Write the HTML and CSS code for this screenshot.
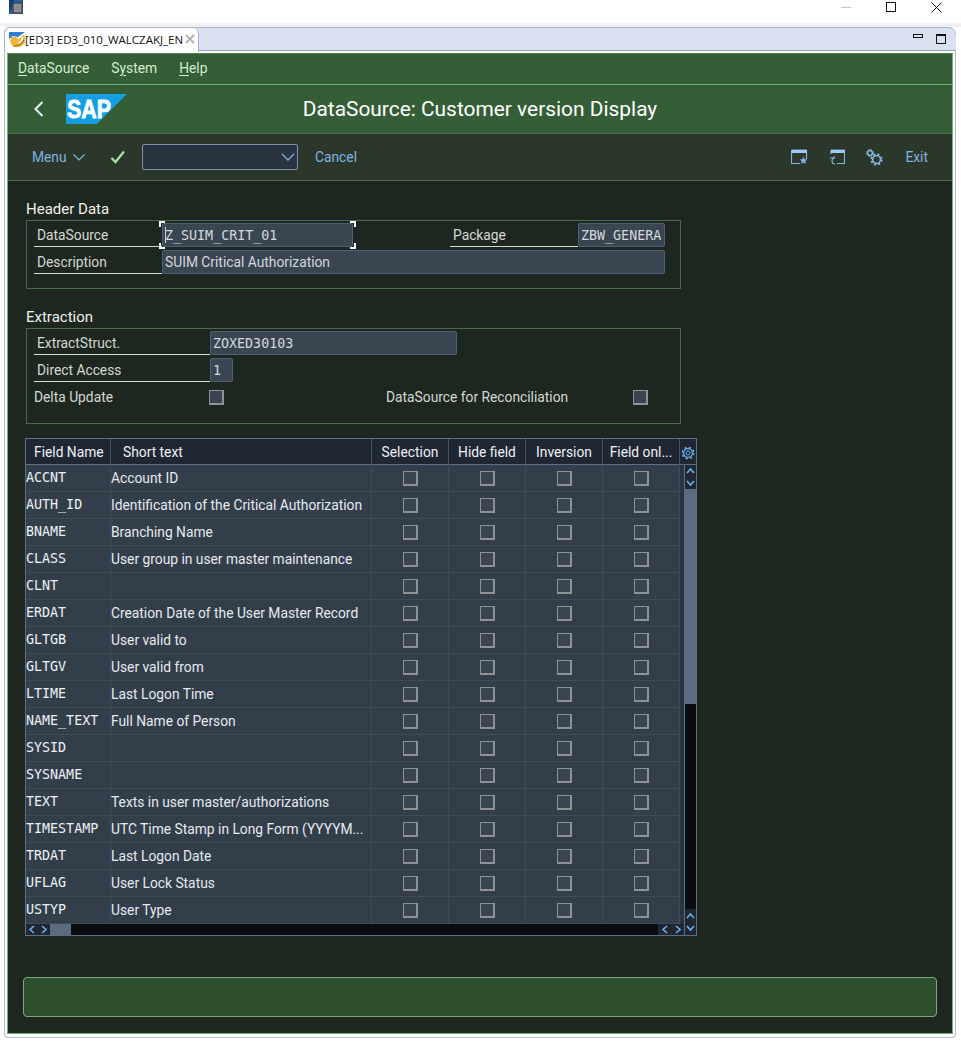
FILE: index.html
```html
<!DOCTYPE html>
<html lang="en">
<head>
<meta charset="utf-8">
<title>DataSource: Customer version Display</title>
<link rel="stylesheet" href="styles.css">
</head>
<body>
<div class="titlebar">
  <svg class="appicon" width="14" height="14" viewBox="0 0 14 14"><rect width="14" height="14" fill="#2f5c9e"/><rect x="4" y="3" width="9" height="10" fill="#8d8d8d" stroke="#333"/><path d="M0 14 L5 0 H0Z" fill="#143a78"/></svg>
  <div class="winctl">
    <span class="wmin"></span>
    <span class="wmax"></span>
    <svg width="11" height="11" viewBox="0 0 11 11"><path d="M0.5 0.5 L10.5 10.5 M10.5 0.5 L0.5 10.5" stroke="#111" stroke-width="1"/></svg>
  </div>
</div>
<div class="band"></div>
<div class="frame">
  <div class="tabstrip">
    <div class="tab">
      <svg width="16" height="15" viewBox="0 0 16 15"><path d="M0 0 H16 L9 5 L4 4 L0 7Z" fill="#2f7fd0"/><path d="M2 5 H7 L10 7 L15 2 L16 5 V10 Q14 15 9 15 H4 L1 10Z" fill="#f2b63c"/><path d="M9 11 Q13 10 13.5 5" fill="none" stroke="#fff" stroke-width="1.6"/><path d="M5 14 Q12 14 15 8" fill="none" stroke="#a8741c" stroke-width="1.2"/></svg>
      <span class="tabtext">[ED3] ED3_010_WALCZAKJ_EN</span>
      <svg class="tabx" width="10" height="10" viewBox="0 0 10 10"><path d="M1 1 L9 9 M9 1 L1 9" stroke="#b4b4b4" stroke-width="2"/></svg>
    </div>
    <div class="tabctl">
      <span class="tmin"></span>
      <span class="tres"></span>
    </div>
  </div>
  <div class="app">
    <div class="menubar">
      <span class="mi"><u>D</u>ataSource</span>
      <span class="mi">S<u>y</u>stem</span>
      <span class="mi"><u>H</u>elp</span>
    </div>
    <div class="shell">
      <svg class="back" width="10" height="16" viewBox="0 0 10 16"><path d="M8.5 1 L1.5 8 L8.5 15" fill="none" stroke="#e8f0f6" stroke-width="2"/></svg>
      <svg class="logo" width="62" height="30" viewBox="0 0 62 30">
        <polygon points="0,0 61,0 31,30 0,30" fill="#139fe2"/>
        <text x="1" y="24" class="logotext" textLength="44" lengthAdjust="spacingAndGlyphs">SAP</text>
      </svg>
      <div class="apptitle">DataSource: Customer version Display</div>
    </div>
    <div class="toolbar">
      <span class="tlink menu">Menu</span>
      <svg class="chev" width="12" height="7" viewBox="0 0 12 7"><path d="M0.5 0.5 L6 6 L11.5 0.5" fill="none" stroke="#7fb4e0" stroke-width="1.2"/></svg>
      <svg class="check" width="16" height="14" viewBox="0 0 16 14"><path d="M1.5 8 L5.5 12 L14 1.5" fill="none" stroke="#a8e2a8" stroke-width="2.2"/></svg>
      <div class="combo"><svg width="14" height="8" viewBox="0 0 14 8"><path d="M1 1 L7 7 L13 1" fill="none" stroke="#7fb4e0" stroke-width="1.3"/></svg></div>
      <span class="tlink cancel">Cancel</span>
      <span class="spacer"></span>
      <svg class="ticon" width="17" height="16" viewBox="0 0 17 16"><path d="M0.5 1 H15.5 V10 M0.5 1 V14.5 H9" fill="none" stroke="#7fb4e0" stroke-width="1.2"/><rect x="0.5" y="1" width="15" height="3" fill="#9ccaf0"/><path d="M12.5 7.5 L13.6 10.2 L16.5 10.4 L14.3 12.2 L15 15 L12.5 13.5 L10 15 L10.7 12.2 L8.5 10.4 L11.4 10.2Z" fill="#7fb4e0"/></svg>
      <svg class="ticon" width="16" height="16" viewBox="0 0 16 16"><path d="M2 1 H15.5 V14.5 H8 M2 1 V5" fill="none" stroke="#7fb4e0" stroke-width="1.2"/><rect x="2" y="1" width="13.5" height="3" fill="#9ccaf0"/><path d="M6 9 A3 3 0 1 0 6 15 M1 9 H5 V7" fill="none" stroke="#7fb4e0" stroke-width="1.1"/></svg>
      <svg class="ticon" width="17" height="17" viewBox="0 0 17 17"><circle cx="4" cy="4" r="2.4" fill="none" stroke="#8cc0ea" stroke-width="1.3"/><circle cx="4" cy="4" r="3.4" fill="none" stroke="#8cc0ea" stroke-width="1" stroke-dasharray="1.6 1.1"/><circle cx="10.5" cy="10.5" r="3.9" fill="none" stroke="#8cc0ea" stroke-width="1.4"/><circle cx="10.5" cy="10.5" r="5.3" fill="none" stroke="#8cc0ea" stroke-width="1.6" stroke-dasharray="2.2 2"/></svg>
      <span class="tlink exit">Exit</span>
    </div>
    <div class="main">
      <h2 class="gtitle">Header Data</h2>
      <div class="group hdr">
        <label class="flabel">DataSource</label>
        <div class="input focus mono"><i class="caret"></i>Z_SUIM_CRIT_01<b class="c ctl"></b><b class="c ctr"></b><b class="c cbl"></b><b class="c cbr"></b></div>
        <label class="flabel pkg">Package</label>
        <div class="input mono">ZBW_GENERA</div>
        <label class="flabel">Description</label>
        <div class="input wide">SUIM Critical Authorization</div>
      </div>
      <h2 class="gtitle second">Extraction</h2>
      <div class="group ext">
        <label class="flabel">ExtractStruct.</label>
        <div class="input mono struct">ZOXED30103</div>
        <label class="flabel">Direct Access</label>
        <div class="input mono short">1</div>
        <span class="plain lead">Delta Update</span>
        <span class="cbcell"><span class="cb"></span></span>
        <span class="plain">DataSource for Reconciliation</span>
        <span class="cbcell"><span class="cb"></span></span>
      </div>
      <div class="table">
        <div class="thead">
          <div class="th t1">Field Name</div>
          <div class="th t2">Short text</div>
          <div class="th tc">Selection</div>
          <div class="th tc">Hide field</div>
          <div class="th tc">Inversion</div>
          <div class="th tc">Field onl...</div>
          <div class="th gear"><svg width="14" height="14" viewBox="0 0 14 14"><circle cx="7" cy="7" r="4.4" fill="none" stroke="#6fb0ea" stroke-width="1.2"/><circle cx="7" cy="7" r="5.7" fill="none" stroke="#6fb0ea" stroke-width="1.4" stroke-dasharray="2.2 2.3"/><circle cx="7" cy="7" r="2" fill="none" stroke="#6fb0ea" stroke-width="1"/></svg></div>
        </div>
        <div class="tbody">
          <div class="rows">
            <div class="row"><div class="fn">ACCNT</div><div class="st">Account ID</div><div class="td"><span class="cb"></span></div><div class="td"><span class="cb"></span></div><div class="td"><span class="cb"></span></div><div class="td"><span class="cb"></span></div></div>
            <div class="row"><div class="fn">AUTH_ID</div><div class="st">Identification of the Critical Authorization</div><div class="td"><span class="cb"></span></div><div class="td"><span class="cb"></span></div><div class="td"><span class="cb"></span></div><div class="td"><span class="cb"></span></div></div>
            <div class="row"><div class="fn">BNAME</div><div class="st">Branching Name</div><div class="td"><span class="cb"></span></div><div class="td"><span class="cb"></span></div><div class="td"><span class="cb"></span></div><div class="td"><span class="cb"></span></div></div>
            <div class="row"><div class="fn">CLASS</div><div class="st">User group in user master maintenance</div><div class="td"><span class="cb"></span></div><div class="td"><span class="cb"></span></div><div class="td"><span class="cb"></span></div><div class="td"><span class="cb"></span></div></div>
            <div class="row"><div class="fn">CLNT</div><div class="st"></div><div class="td"><span class="cb"></span></div><div class="td"><span class="cb"></span></div><div class="td"><span class="cb"></span></div><div class="td"><span class="cb"></span></div></div>
            <div class="row"><div class="fn">ERDAT</div><div class="st">Creation Date of the User Master Record</div><div class="td"><span class="cb"></span></div><div class="td"><span class="cb"></span></div><div class="td"><span class="cb"></span></div><div class="td"><span class="cb"></span></div></div>
            <div class="row"><div class="fn">GLTGB</div><div class="st">User valid to</div><div class="td"><span class="cb"></span></div><div class="td"><span class="cb"></span></div><div class="td"><span class="cb"></span></div><div class="td"><span class="cb"></span></div></div>
            <div class="row"><div class="fn">GLTGV</div><div class="st">User valid from</div><div class="td"><span class="cb"></span></div><div class="td"><span class="cb"></span></div><div class="td"><span class="cb"></span></div><div class="td"><span class="cb"></span></div></div>
            <div class="row"><div class="fn">LTIME</div><div class="st">Last Logon Time</div><div class="td"><span class="cb"></span></div><div class="td"><span class="cb"></span></div><div class="td"><span class="cb"></span></div><div class="td"><span class="cb"></span></div></div>
            <div class="row"><div class="fn">NAME_TEXT</div><div class="st">Full Name of Person</div><div class="td"><span class="cb"></span></div><div class="td"><span class="cb"></span></div><div class="td"><span class="cb"></span></div><div class="td"><span class="cb"></span></div></div>
            <div class="row"><div class="fn">SYSID</div><div class="st"></div><div class="td"><span class="cb"></span></div><div class="td"><span class="cb"></span></div><div class="td"><span class="cb"></span></div><div class="td"><span class="cb"></span></div></div>
            <div class="row"><div class="fn">SYSNAME</div><div class="st"></div><div class="td"><span class="cb"></span></div><div class="td"><span class="cb"></span></div><div class="td"><span class="cb"></span></div><div class="td"><span class="cb"></span></div></div>
            <div class="row"><div class="fn">TEXT</div><div class="st">Texts in user master/authorizations</div><div class="td"><span class="cb"></span></div><div class="td"><span class="cb"></span></div><div class="td"><span class="cb"></span></div><div class="td"><span class="cb"></span></div></div>
            <div class="row"><div class="fn">TIMESTAMP</div><div class="st">UTC Time Stamp in Long Form (YYYYM...</div><div class="td"><span class="cb"></span></div><div class="td"><span class="cb"></span></div><div class="td"><span class="cb"></span></div><div class="td"><span class="cb"></span></div></div>
            <div class="row"><div class="fn">TRDAT</div><div class="st">Last Logon Date</div><div class="td"><span class="cb"></span></div><div class="td"><span class="cb"></span></div><div class="td"><span class="cb"></span></div><div class="td"><span class="cb"></span></div></div>
            <div class="row"><div class="fn">UFLAG</div><div class="st">User Lock Status</div><div class="td"><span class="cb"></span></div><div class="td"><span class="cb"></span></div><div class="td"><span class="cb"></span></div><div class="td"><span class="cb"></span></div></div>
            <div class="row"><div class="fn">USTYP</div><div class="st">User Type</div><div class="td"><span class="cb"></span></div><div class="td"><span class="cb"></span></div><div class="td"><span class="cb"></span></div><div class="td"><span class="cb"></span></div></div>
            <div class="hbar">
              <div class="sbtn hb"><svg width="8" height="9" viewBox="0 0 8 9"><path d="M6 1 L2 4.5 L6 8" fill="none" stroke="#6fb0ea" stroke-width="1.6"/></svg><svg width="8" height="9" viewBox="0 0 8 9"><path d="M2 1 L6 4.5 L2 8" fill="none" stroke="#6fb0ea" stroke-width="1.6"/></svg></div>
              <div class="hthumb"></div>
              <div class="htrack"></div>
              <div class="sbtn hb"><svg width="8" height="9" viewBox="0 0 8 9"><path d="M6 1 L2 4.5 L6 8" fill="none" stroke="#6fb0ea" stroke-width="1.6"/></svg><svg width="8" height="9" viewBox="0 0 8 9"><path d="M2 1 L6 4.5 L2 8" fill="none" stroke="#6fb0ea" stroke-width="1.6"/></svg></div>
            </div>
          </div>
          <div class="vbar">
            <div class="sbtn vb vtop"><svg width="9" height="8" viewBox="0 0 9 8"><path d="M1 6 L4.5 2 L8 6" fill="none" stroke="#6fb0ea" stroke-width="1.6"/></svg><svg width="9" height="8" viewBox="0 0 9 8"><path d="M1 2 L4.5 6 L8 2" fill="none" stroke="#6fb0ea" stroke-width="1.6"/></svg></div>
            <div class="vthumb"></div>
            <div class="vtrack"></div>
            <div class="sbtn vb vbot"><svg width="9" height="8" viewBox="0 0 9 8"><path d="M1 6 L4.5 2 L8 6" fill="none" stroke="#6fb0ea" stroke-width="1.6"/></svg><svg width="9" height="8" viewBox="0 0 9 8"><path d="M1 2 L4.5 6 L8 2" fill="none" stroke="#6fb0ea" stroke-width="1.6"/></svg></div>
          </div>
        </div>
      </div>
      <div class="status"></div>
    </div>
  </div>
</div>
</body>
</html>
```
FILE: styles.css
```css
* { box-sizing: border-box; }
html, body { margin: 0; padding: 0; }
body {
  width: 961px;
  height: 1041px;
  overflow: hidden;
  background: #fff;
  font-family: Roboto, Inter, sans-serif;
  font-size: 13.8px;
  color: #dfe3df;
  display: flex;
  flex-direction: column;
}
.titlebar { height: 23px; display: flex; justify-content: space-between; padding-left: 9px; flex: none; background: #fff; }
.appicon { display: block; }
.winctl { display: flex; align-items: flex-start; gap: 35px; padding: 2px 19px 0 0; }
.wmin { width: 10px; height: 1px; background: #c8c8c8; margin-top: 5px; }
.wmax { width: 10px; height: 10px; border: 1px solid #111; }
.band { height: 4px; background: #f0f0f0; flex: none; }
.frame {
  margin: 0 5px 3px 4px;
  flex: 1;
  min-height: 0;
  display: flex;
  flex-direction: column;
  background: #fff;
  border: 1px solid #b4bdd2;
  border-radius: 6px 8px 4px 4px;
  border-top: 0;
}
.tabstrip {
  height: 24px;
  flex: none;
  display: flex;
  justify-content: space-between;
  background: #d9e0f0;
  border-radius: 6px 8px 0 0;
  border-top: 1px solid #a9b3cc;
  box-shadow: inset 0 -1px 0 #98a5c2;
  margin: 0 -1px;
}
.tab {
  width: 195px;
  height: 24px;
  background: #fff;
  border: 1px solid #a9b3cc;
  border-bottom: 0;
  border-top: 0;
  border-radius: 6px 6px 0 0;
  display: flex;
  align-items: center;
  padding: 0 0 2px 4px;
  font-size: 12px;
  color: #111;
  position: relative;
}
.tabtext { white-space: nowrap; font-family: "Open Sans", Inter, sans-serif; font-size: 11.5px; width: 158px; }
.tabx { margin-left: 2px; flex: none; }
.tabctl { display: flex; gap: 13px; padding: 6px 10px 0 0; }
.tmin { width: 10px; height: 4px; border: 1px solid #111; }
.tres { width: 10px; height: 10px; border: 1px solid #111; border-top-width: 2px; }
.app {
  margin: 2px 2px 3px 2px;
  flex: 1;
  min-height: 0;
  display: flex;
  flex-direction: column;
  background: #1e271f;
  border: 1px solid #6fb26f;
  border-top: 1px solid #4c8a4c;
}
.menubar {
  height: 31px;
  flex: none;
  display: flex;
  align-items: center;
  gap: 22px;
  padding: 0 0 2px 10px;
  background: #355e36;
  border-bottom: 1px solid #6fb26f;
  color: #d4ecd4;
}
.mi u { text-underline-offset: 2px; }
.shell {
  height: 49px;
  flex: none;
  background: #355e36;
  display: flex;
  align-items: center;
  position: relative;
  padding-left: 26px;
  border-bottom: 1px solid #466a46;
}
.back { margin-right: 22px; }
.logo { display: block; }
.logotext { font-family: "Liberation Sans", sans-serif; font-weight: 700; font-size: 26px; fill: #fff; stroke: #fff; stroke-width: 0.8px; }
.apptitle {
  position: absolute;
  left: 0;
  right: 0;
  top: 12px;
  text-align: center;
  font-size: 20.9px;
  color: #fff;
  line-height: 24px;
}
.toolbar {
  height: 47px;
  flex: none;
  display: flex;
  align-items: center;
  background: #2a372a;
  border-bottom: 1px solid #466a46;
  padding: 0 24px 0 24px;
  color: #7fb4e0;
}
.tlink { color: #7fb4e0; }
.menu { width: 41px; }
.check { margin-left: 25px; }
.combo {
  width: 156px;
  height: 26px;
  margin-left: 16px;
  background: #2a3440;
  border: 1px solid #7f93ad;
  border-radius: 2px;
  display: flex;
  align-items: center;
  justify-content: flex-end;
  padding-right: 2px;
}
.cancel { margin-left: 17px; }
.spacer { flex: 1; }
.ticon { margin-right: 21px; }
.exit { margin-left: 1px; }
.main { flex: 1; min-height: 0; padding: 19px 0 0 18px; }
.gtitle { margin: 0; height: 20px; font-weight: 400; font-size: 15px; line-height: 18px; color: #eef1ee; }
.gtitle.second { margin-top: 19px; }
.group {
  width: 655px;
  border: 1px solid #466a46;
  padding: 2px 0 0 7px;
  display: grid;
  grid-auto-rows: 24px;
  row-gap: 3px;
}
.hdr { height: 69px; grid-template-columns: 128px 191px 97px 128px 87px; }
.ext { height: 96px; grid-template-columns: 176px 176px 248px 30px; }
.flabel {
  grid-column: 1;
  border-bottom: 1px solid #d4d8d4;
  padding-left: 3px;
  line-height: 25px;
  height: 24px;
  color: #d4d8d4;
}
.flabel.pkg { grid-column: 4; }
.input {
  background: #3a4552;
  border: 1px solid #4d5f78;
  border-radius: 2px;
  color: #d4d8dc;
  padding-left: 2px;
  line-height: 22px;
  position: relative;
  white-space: nowrap;
}
.mono { font-family: "DejaVu Sans Mono", "Liberation Mono", monospace; font-size: 13.33px; line-height: 24px; }
.wide { grid-column: 2 / span 4; }
.struct { grid-column: 2 / span 2; width: 247px; }
.short { width: 23px; }
.caret { position: absolute; left: 2px; top: 3px; width: 1px; height: 16px; background: #cfd4d8; }
.c { position: absolute; width: 6px; height: 6px; border: 0 solid #fff; }
.ctl { left: -4px; top: -3px; border-width: 2px 0 0 2px; }
.ctr { right: -4px; top: -3px; border-width: 2px 2px 0 0; }
.cbl { left: -4px; bottom: -3px; border-width: 0 0 2px 2px; }
.cbr { right: -4px; bottom: -3px; border-width: 0 2px 2px 0; }
.plain { line-height: 24px; color: #d4d8d4; white-space: nowrap; }
.plain.lead { grid-column: 1; }
.cbcell { display: flex; align-items: center; margin-left: -1px; }
.cb {
  display: block;
  width: 15px;
  height: 15px;
  background: #3a4552;
  border: 1px solid #8e9296;
  border-width: 1px 2px 2px 1px;
}
.table {
  width: 672px;
  height: 498px;
  margin: 14px 0 0 -1px;
  border: 1px solid #5b6f86;
  background: #333e4b;
  display: flex;
  flex-direction: column;
}
.thead {
  height: 26px;
  flex: none;
  display: grid;
  grid-template-columns: 84px 261px 77px 77px 77px 77px 17px;
  background: #1f2733;
  border-bottom: 1px solid #5b6f86;
}
.th { line-height: 27px; color: #eef1f4; white-space: nowrap; border-left: 1px solid #46566a; text-align: center; }
.t1 { padding-left: 8px; text-align: left; border-left: 0; }
.t2 { padding-left: 12px; text-align: left; }
.gear { display: flex; align-items: center; justify-content: center; }
.tbody { flex: 1; min-height: 0; display: flex; }
.rows { width: 658px; flex: none; background: #2a3440; }
.row {
  height: 27px;
  display: grid;
  grid-template-columns: 84px 261px 77px 77px 77px 77px;
  grid-template-rows: 26px;
  border-bottom: 1px solid #3f4b59;
  width: 654px;
  background: #333e4b;
  border-right: 1px solid #3f4b59;
}
.row > div { border-left: 1px solid #3f4b59; min-width: 0; }
.row > .fn { border-left: 0; font-family: "DejaVu Sans Mono", "Liberation Mono", monospace; font-size: 13.33px; line-height: 26px; color: #eef1f4; }
.st { line-height: 27px; color: #e6eaee; white-space: nowrap; }
.td { display: flex; align-items: center; justify-content: center; }
.hbar { height: 11px; display: flex; width: 658px; background: #0a0c0f; }
.hb { width: 24px; justify-content: space-around; }
.hthumb { width: 21px; background: #5b6b80; }
.htrack { flex: 1; background: #0a0c0f; }
.hbar .hb:last-child { width: 26px; }
.sbtn { background: #1f2733; display: flex; align-items: center; }
.vbar { width: 12px; flex: 1; display: flex; flex-direction: column; border-left: 1px solid #5b6f86; background: #0a0c0f; }
.vb { flex-direction: column; gap: 4px; justify-content: center; }
.vtop { height: 24px; }
.vbot { height: 26px; margin-top: auto; }
.vthumb { height: 215px; background: #5b6b80; }
.vtrack { flex: 1; }
.status {
  width: 914px;
  height: 40px;
  margin: 41px 0 0 -3px;
  background: #2c4f2e;
  border: 1px solid #7aa87a;
  border-radius: 4px;
}
```
